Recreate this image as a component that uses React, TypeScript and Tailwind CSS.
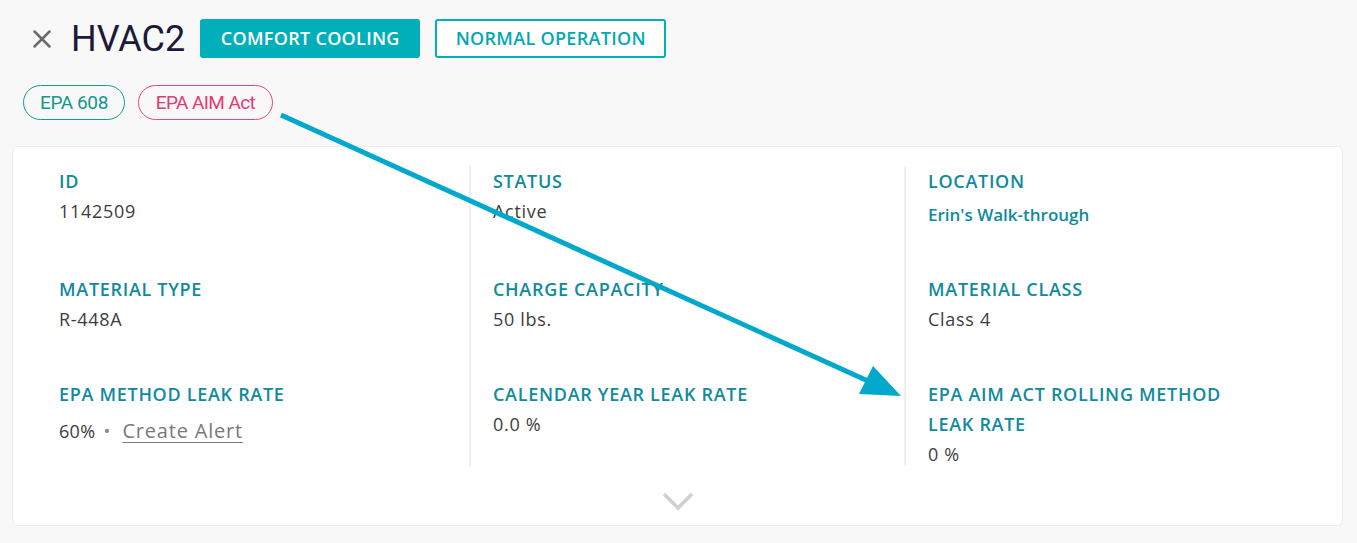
import { X } from 'lucide-react'

type Field = {
  label: string
  value: React.ReactNode
}

const open = { fontFamily: '"Open Sans", "Liberation Sans", sans-serif' }
const roboto = { fontFamily: 'Roboto, "Liberation Sans", sans-serif' }

function Label({ children }: { children: React.ReactNode }) {
  return (
    <div className="text-[18px] leading-[30px] font-semibold tracking-[0.7px] text-[#0f8a9e] uppercase">
      {children}
    </div>
  )
}

function Value({ children }: { children: React.ReactNode }) {
  return <div className="text-[18px] leading-[30px] tracking-[0.7px] text-[#3d3d3d]">{children}</div>
}

function Column({ rows, first }: { rows: Field[]; first?: boolean }) {
  return (
    <div
      className={`w-[435px] h-[300px] flex flex-col ${
        first ? 'pl-[25px]' : 'pl-[22px] border-l-2 border-[#f0f0f3]'
      }`}
    >
      <div className="h-[108px] shrink-0 max-w-[330px]">
        <Label>{rows[0].label}</Label>
        {rows[0].value}
      </div>
      <div className="h-[105px] shrink-0 max-w-[330px]">
        <Label>{rows[1].label}</Label>
        {rows[1].value}
      </div>
      <div className="shrink-0 max-w-[330px]">
        <Label>{rows[2].label}</Label>
        {rows[2].value}
      </div>
    </div>
  )
}

export default function App() {
  const col1: Field[] = [
    { label: 'ID', value: <Value>1142509</Value> },
    { label: 'Material Type', value: <Value>R-448A</Value> },
    {
      label: 'EPA Method Leak Rate',
      value: (
        <div className="text-[18px] leading-[44px] tracking-[0.3px] text-[#3d3d3d] flex items-center">
          60%
          <span className="ml-[8px] mr-[12px] text-[#888]">•</span>
          <span className="text-[20px] tracking-[0.8px] text-[#7a7a7a] underline underline-offset-[4px] decoration-1">
            Create Alert
          </span>
        </div>
      ),
    },
  ]
  const col2: Field[] = [
    { label: 'Status', value: <Value>Active</Value> },
    { label: 'Charge Capacity', value: <Value>50 lbs.</Value> },
    { label: 'Calendar Year Leak Rate', value: <Value>0.0 %</Value> },
  ]
  const col3: Field[] = [
    {
      label: 'Location',
      value: (
        <div className="text-[17px] leading-[38px] font-semibold text-[#0f8a9e]">
          Erin's Walk-through
        </div>
      ),
    },
    { label: 'Material Class', value: <Value>Class 4</Value> },
    {
      label: 'EPA AIM Act Rolling Method Leak Rate',
      value: <Value>0 %</Value>,
    },
  ]

  return (
    <div className="relative w-[1357px] h-[543px] bg-[#f8f8f9] overflow-hidden" style={open}>
      <div className="pl-[23px] pt-[19px]">
        <div className="flex items-center h-[39px]">
          <X className="ml-[4px] w-[30px] h-[30px] text-[#6b6b6b]" strokeWidth={2} />
          <h1 className="ml-[14px] text-[36px] leading-none text-[#1b1a38]" style={roboto}>
            HVAC2
          </h1>
          <div className="ml-[15px] h-[39px] w-[220px] flex items-center justify-center rounded-[3px] bg-[#00afb9] text-white text-[18px] font-semibold tracking-[0.3px]">
            COMFORT COOLING
          </div>
          <div className="ml-[15px] h-[39px] w-[231px] flex items-center justify-center rounded-[3px] border-2 border-[#00afb9] bg-white text-[#00a9b4] text-[18px] font-semibold tracking-[0.3px]">
            NORMAL OPERATION
          </div>
        </div>

        <div className="flex gap-[13px] mt-[27px]" style={roboto}>
          <div className="h-[35px] w-[102px] pt-[2px] flex items-center justify-center rounded-full border border-[#179c8c] text-[#13988a] text-[19px] tracking-[-0.4px]">
            EPA 608
          </div>
          <div className="h-[35px] w-[135px] pt-[2px] flex items-center justify-center rounded-full border border-[#e8467c] text-[#e53a72] text-[19px] tracking-[-0.6px]">
            EPA AIM Act
          </div>
        </div>
      </div>

      <div className="mx-[12px] mt-[26px] w-[1331px] h-[380px] bg-white rounded-[6px] border border-[#ebebf2] pt-[19px]">
        <div className="flex pl-[21px]">
          <Column rows={col1} first />
          <Column rows={col2} />
          <Column rows={col3} />
        </div>
        <div className="flex justify-center mt-[25px]">
          <svg width="32" height="20" viewBox="0 0 32 20" fill="none">
            <polyline points="2,3 16,17 30,3" stroke="#d0d0d0" strokeWidth="3.5" />
          </svg>
        </div>
      </div>

      {/* annotation arrow */}
      <svg className="absolute inset-0 pointer-events-none" width="1357" height="543">
        <line x1="281" y1="115" x2="868" y2="381" stroke="#00a9cb" strokeWidth="5" />
        <polygon points="901,396 859,394 873,366" fill="#00a9cb" />
      </svg>
    </div>
  )
}
